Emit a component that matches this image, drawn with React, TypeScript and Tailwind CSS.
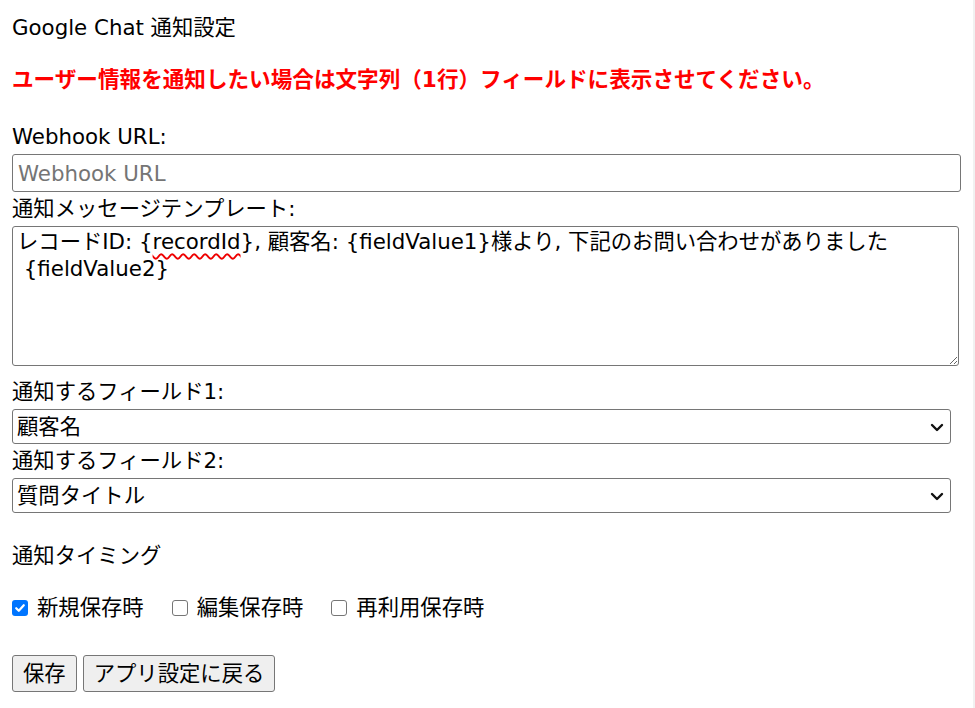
import React, { useState } from 'react';

const FONT = { fontFamily: '"DejaVu Sans", "Noto Sans CJK JP", sans-serif' };

const Chevron = () => (
  <svg width="14" height="10" viewBox="0 0 14 10" className="pointer-events-none absolute right-[7px] top-1/2 -translate-y-1/2">
    <path d="M2 3 L7 8 L12 3" fill="none" stroke="#111" strokeWidth="2.4" strokeLinecap="round" strokeLinejoin="round" />
  </svg>
);

const Select = ({ value, options }: { value: string; options: string[] }) => (
  <div className="relative w-[939px]">
    <select
      defaultValue={value}
      className="block h-[35px] w-full appearance-none rounded-[3px] border border-[#767676] bg-white pl-[4px] pr-8 text-[21.33px] leading-none text-black"
    >
      {options.map((o) => (
        <option key={o}>{o}</option>
      ))}
    </select>
    <Chevron />
  </div>
);

const Check = ({ label, checked, onToggle }: { label: string; checked: boolean; onToggle: () => void }) => (
  <label className="flex cursor-default items-center" onClick={onToggle}>
    {checked ? (
      <span className="flex h-[16px] w-[16px] items-center justify-center rounded-[3px] bg-[#0075ff]">
        <svg width="12" height="12" viewBox="0 0 12 12">
          <path d="M2.2 6.2 L4.8 8.8 L9.8 3.2" fill="none" stroke="#fff" strokeWidth="2.2" strokeLinecap="round" strokeLinejoin="round" />
        </svg>
      </span>
    ) : (
      <span className="h-[16px] w-[16px] rounded-[3px] border border-[#767676] bg-white" />
    )}
    <span className="ml-[9px]">{label}</span>
  </label>
);

export default function App() {
  const [timing, setTiming] = useState({ create: true, edit: false, reuse: false });

  return (
    <div className="flex min-h-[708px] w-[975px] bg-white text-black" style={FONT}>
      <div className="flex-1 pl-[12px] pt-[11px] text-[21.33px] leading-[34px]">
        <div>Google Chat 通知設定</div>
        <p className="mt-[18px] text-[21.6px] font-bold text-[#ff0000]">
          ユーザー情報を通知したい場合は文字列（1行）フィールドに表示させてください。
        </p>

        <div className="mt-[23px]">Webhook URL:</div>
        <input
          type="text"
          placeholder="Webhook URL"
          className="block h-[38px] w-[949px] rounded-[3px] border border-[#767676] bg-white px-[5px] text-[21.33px] placeholder:text-[#757575]"
        />

        <div>通知メッセージテンプレート:</div>
        <div className="h-[140px] w-[947px] resize overflow-auto rounded-[3px] border border-[#767676] bg-white px-[4px] pt-[1px] leading-[27px] whitespace-pre-wrap">
          レコードID: {'{'}
          <span className="underline decoration-[#e00] decoration-wavy decoration-[1.5px] underline-offset-[4px]">recordId</span>
          {'}'}, 顧客名: {'{fieldValue1}'}様より, 下記のお問い合わせがありました{'\n'} {'{fieldValue2}'}
        </div>

        <div className="mt-[9px]">通知するフィールド1:</div>
        <Select value="顧客名" options={['顧客名', '質問タイトル']} />
        <div>通知するフィールド2:</div>
        <Select value="質問タイトル" options={['顧客名', '質問タイトル']} />

        <div className="mt-[26px]">通知タイミング</div>
        <div className="mt-[18px] flex gap-[28px]">
          <Check label="新規保存時" checked={timing.create} onToggle={() => setTiming({ ...timing, create: !timing.create })} />
          <Check label="編集保存時" checked={timing.edit} onToggle={() => setTiming({ ...timing, edit: !timing.edit })} />
          <Check label="再利用保存時" checked={timing.reuse} onToggle={() => setTiming({ ...timing, reuse: !timing.reuse })} />
        </div>

        <div className="mt-[30px] flex gap-[6px]">
          <button className="h-[37px] rounded-[3px] border border-[#767676] bg-[#efefef] px-[10px] leading-none">保存</button>
          <button className="h-[37px] rounded-[3px] border border-[#767676] bg-[#efefef] px-[10px] leading-none">アプリ設定に戻る</button>
        </div>
      </div>
      <div className="w-[2px] bg-[#f1f1f1]" />
    </div>
  );
}
